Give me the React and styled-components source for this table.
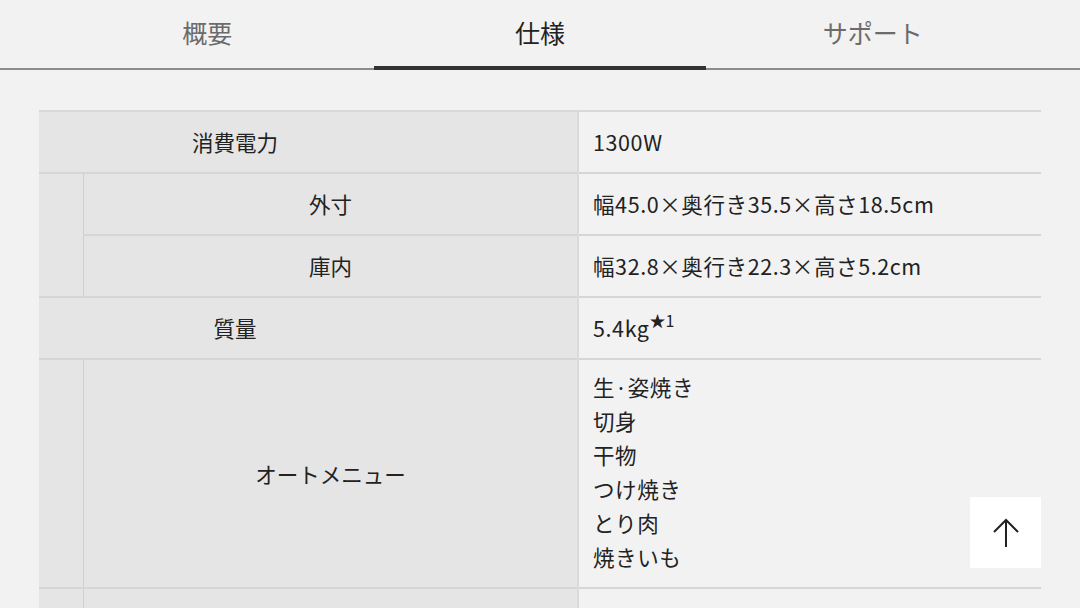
import styled, { createGlobalStyle } from "styled-components";

const GlobalStyle = createGlobalStyle`
  html, body {
    margin: 0;
    padding: 0;
    height: 608px;
    overflow: hidden;
    background: #f2f2f2;
    font-family: "Noto Sans CJK JP", "Noto Sans", sans-serif;
    color: #222;
  }
`;

const TabBar = styled.nav`
  display: flex;
  padding: 0 41px;
  height: 68px;
  border-bottom: 2px solid #8c8c8c;
`;

const Tab = styled.div`
  flex: 1;
  display: flex;
  align-items: center;
  justify-content: center;
  box-sizing: border-box;
  height: 70px;
  margin-bottom: -2px;
  padding-bottom: 2px;
  font-size: 25px;
  color: ${({ active }) => (active ? "#222" : "#6b6b6b")};
  border-bottom: 4px solid ${({ active }) => (active ? "#333" : "transparent")};
`;

const Content = styled.main`
  padding: 40px 39px 0;
`;

const SpecTable = styled.table`
  width: 100%;
  border-collapse: collapse;
  border-top: 2px solid #d9d9d9;
  font-size: 21.5px;
`;

const Row = styled.tr`
  border-bottom: 2px solid #d6d6d6;
`;

const Head = styled.th`
  background: #e5e5e5;
  font-weight: 400;
  text-align: center;
  vertical-align: middle;
  padding: ${({ top }) => (top ? "13px 146px 13px 0" : "13px 0 13px")};
  line-height: 34px;
  width: ${({ top }) => (top ? "538px" : "auto")};
  border-left: ${({ top }) => (top ? "none" : "1px solid #cfcfcf")};
`;

const Stub = styled.td`
  background: #e5e5e5;
  width: 44px;
  padding: 0;
`;

const Value = styled.td`
  border-left: 2px solid #dadada;
  padding: 13px 14px 13px;
  line-height: 34px;
  letter-spacing: 0.6px;
  vertical-align: top;
  width: 434px;
`;

const Note = styled.sup`
  font-size: 16px;
  line-height: 0;
  letter-spacing: 0;
  position: relative;
  top: -2px;
`;

const MenuList = styled.ul`
  list-style: none;
  margin: -3px 0 0;
  padding: 0;
  line-height: 34px;
`;

const TopButton = styled.button`
  position: fixed;
  right: 39px;
  bottom: 40px;
  width: 71px;
  height: 71px;
  border: none;
  background: #fff;
  display: flex;
  align-items: center;
  justify-content: center;
  padding: 0;
  cursor: pointer;
`;

const menus = ["生·姿焼き", "切身", "干物", "つけ焼き", "とり肉", "焼きいも"];

export default function App() {
  return (
    <>
      <GlobalStyle />
      <TabBar>
        <Tab>概要</Tab>
        <Tab active>仕様</Tab>
        <Tab>サポート</Tab>
      </TabBar>
      <Content>
        <SpecTable>
          <tbody>
            <Row>
              <Head top colSpan={2}>消費電力</Head>
              <Value>1300W</Value>
            </Row>
            <Row>
              <Stub rowSpan={2} />
              <Head>外寸</Head>
              <Value>幅45.0×奥行き35.5×高さ18.5cm</Value>
            </Row>
            <Row>
              <Head>庫内</Head>
              <Value>幅32.8×奥行き22.3×高さ5.2cm</Value>
            </Row>
            <Row>
              <Head top colSpan={2}>質量</Head>
              <Value>
                5.4kg<Note>★1</Note>
              </Value>
            </Row>
            <Row>
              <Stub />
              <Head>オートメニュー</Head>
              <Value>
                <MenuList>
                  {menus.map((m) => (
                    <li key={m}>{m}</li>
                  ))}
                </MenuList>
              </Value>
            </Row>
            <Row>
              <Stub />
              <Head>&nbsp;</Head>
              <Value>&nbsp;</Value>
            </Row>
          </tbody>
        </SpecTable>
      </Content>
      <TopButton aria-label="ページトップへ">
        <svg width="28" height="30" viewBox="0 0 28 30" fill="none" stroke="#222" strokeWidth="2">
          <path d="M14 29V2" />
          <path d="M2 14L14 2L26 14" />
        </svg>
      </TopButton>
    </>
  );
}
